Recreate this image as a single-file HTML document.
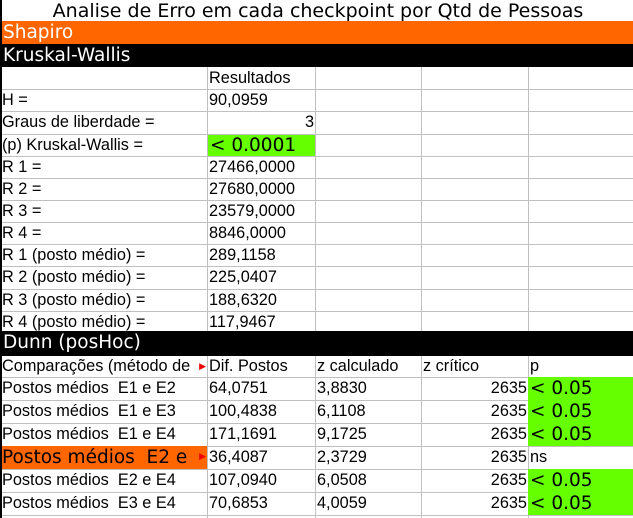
<!DOCTYPE html>
<html><head><meta charset="utf-8"><style>
*{margin:0;padding:0;box-sizing:border-box}
body{width:633px;height:518px;overflow:hidden;background:#fff;position:relative;font-family:"Liberation Sans",sans-serif;font-size:16.3px;color:#000}
.c{position:absolute;height:22px;line-height:22px;white-space:nowrap;overflow:hidden;padding-left:2px}
.b .c{height:23px;line-height:23px}
.h{position:absolute;left:0;width:633px;border-top:1px solid #c0c0c0}
.v{position:absolute;border-left:1px solid #c0c0c0}
.dj{font-family:"DejaVu Sans",sans-serif;font-size:18.5px}
.r{text-align:right;padding-right:1px}
.g{background:#66ff00}
.band{position:absolute;left:0;width:633px;height:23px;line-height:23px;padding-left:3px;font-family:"DejaVu Sans",sans-serif;font-size:18.5px}
.ar{position:absolute;right:1px;top:0;color:#e00;font-size:9px}
</style></head><body>
<div style="position:absolute;left:0;top:0;width:636px;height:22px;line-height:22px;text-align:center;font-family:'DejaVu Sans',sans-serif;font-size:19px">Analise de Erro em cada checkpoint por Qtd de Pessoas</div>
<div class="band" style="top:21px;background:#ff6600;color:#fff">Shapiro</div>
<div class="band" style="top:44px;background:#000;color:#fff">Kruskal-Wallis</div>

<div class="v" style="left:207px;top:67px;height:265px"></div>
<div class="v" style="left:315px;top:67px;height:265px"></div>
<div class="v" style="left:421px;top:67px;height:265px"></div>
<div class="v" style="left:528px;top:67px;height:265px"></div>
<div class="v" style="left:207px;top:356px;height:162px"></div>
<div class="v" style="left:315px;top:356px;height:162px"></div>
<div class="v" style="left:421px;top:356px;height:162px"></div>
<div class="v" style="left:528px;top:356px;height:162px"></div>

<div class="h" style="top:89px"></div><div class="h" style="top:111px"></div><div class="h" style="top:134px"></div>
<div class="h" style="top:156px"></div><div class="h" style="top:178px"></div><div class="h" style="top:200px"></div>
<div class="h" style="top:222px"></div><div class="h" style="top:244px"></div><div class="h" style="top:266px"></div>
<div class="h" style="top:289px"></div><div class="h" style="top:311px"></div>
<div class="h" style="top:377px"></div><div class="h" style="top:400px"></div><div class="h" style="top:423px"></div>
<div class="h" style="top:446px"></div><div class="h" style="top:469px"></div><div class="h" style="top:492px"></div><div class="h" style="top:515px"></div>

<div class="c" style="left:207px;top:67px;width:108px">Resultados</div>
<div class="c" style="left:0;top:89px;width:207px">H =</div><div class="c" style="left:207px;top:89px;width:108px">90,0959</div>
<div class="c" style="left:0;top:111px;width:207px">Graus de liberdade =</div><div class="c r" style="left:207px;top:111px;width:108px">3</div>
<div class="c" style="left:0;top:134px;width:207px">(p) Kruskal-Wallis =</div><div class="c g dj" style="left:208px;top:135px;width:107px;height:21px;line-height:21px">&lt; 0.0001</div>
<div class="c" style="left:0;top:156px;width:207px">R 1 =</div><div class="c" style="left:207px;top:156px;width:108px">27466,0000</div>
<div class="c" style="left:0;top:178px;width:207px">R 2 =</div><div class="c" style="left:207px;top:178px;width:108px">27680,0000</div>
<div class="c" style="left:0;top:200px;width:207px">R 3 =</div><div class="c" style="left:207px;top:200px;width:108px">23579,0000</div>
<div class="c" style="left:0;top:222px;width:207px">R 4 =</div><div class="c" style="left:207px;top:222px;width:108px">8846,0000</div>
<div class="c" style="left:0;top:244px;width:207px">R 1 (posto médio) =</div><div class="c" style="left:207px;top:244px;width:108px">289,1158</div>
<div class="c" style="left:0;top:266px;width:207px">R 2 (posto médio) =</div><div class="c" style="left:207px;top:266px;width:108px">225,0407</div>
<div class="c" style="left:0;top:289px;width:207px">R 3 (posto médio) =</div><div class="c" style="left:207px;top:289px;width:108px">188,6320</div>
<div class="c" style="left:0;top:311px;width:207px">R 4 (posto médio) =</div><div class="c" style="left:207px;top:311px;width:108px">117,9467</div>

<div class="band" style="top:331px;height:25px;line-height:24px;background:#000;color:#fff">Dunn (posHoc)</div>

<div class="b">
<div class="c" style="left:0;top:355px;width:207px">Comparações (método de<span class="ar">▶</span></div>
<div class="c" style="left:207px;top:355px;width:108px">Dif. Postos</div>
<div class="c" style="left:315px;top:355px;width:106px">z calculado</div>
<div class="c" style="left:421px;top:355px;width:107px">z crítico</div>
<div class="c" style="left:528px;top:355px;width:105px">p</div>

<div class="c" style="left:0;top:377px;width:207px">Postos médios&nbsp; E1 e E2</div><div class="c" style="left:207px;top:377px;width:108px">64,0751</div><div class="c" style="left:315px;top:377px;width:106px">3,8830</div><div class="c r" style="left:421px;top:377px;width:107px">2635</div><div class="c g dj" style="left:528px;top:377px;width:105px">&lt; 0.05</div>
<div class="c" style="left:0;top:400px;width:207px">Postos médios&nbsp; E1 e E3</div><div class="c" style="left:207px;top:400px;width:108px">100,4838</div><div class="c" style="left:315px;top:400px;width:106px">6,1108</div><div class="c r" style="left:421px;top:400px;width:107px">2635</div><div class="c g dj" style="left:528px;top:400px;width:105px">&lt; 0.05</div>
<div class="c" style="left:0;top:423px;width:207px">Postos médios&nbsp; E1 e E4</div><div class="c" style="left:207px;top:423px;width:108px">171,1691</div><div class="c" style="left:315px;top:423px;width:106px">9,1725</div><div class="c r" style="left:421px;top:423px;width:107px">2635</div><div class="c g dj" style="left:528px;top:423px;width:105px">&lt; 0.05</div>
<div class="c dj" style="left:0;top:446px;width:207px;background:#ff6600"><span style="display:inline-block;width:192px;overflow:hidden;vertical-align:top">Postos médios&nbsp; E2 e E3</span><span class="ar">▶</span></div><div class="c" style="left:207px;top:446px;width:108px">36,4087</div><div class="c" style="left:315px;top:446px;width:106px">2,3729</div><div class="c r" style="left:421px;top:446px;width:107px">2635</div><div class="c" style="left:528px;top:446px;width:105px">ns</div>
<div class="c" style="left:0;top:469px;width:207px">Postos médios&nbsp; E2 e E4</div><div class="c" style="left:207px;top:469px;width:108px">107,0940</div><div class="c" style="left:315px;top:469px;width:106px">6,0508</div><div class="c r" style="left:421px;top:469px;width:107px">2635</div><div class="c g dj" style="left:528px;top:469px;width:105px">&lt; 0.05</div>
<div class="c" style="left:0;top:492px;width:207px">Postos médios&nbsp; E3 e E4</div><div class="c" style="left:207px;top:492px;width:108px">70,6853</div><div class="c" style="left:315px;top:492px;width:106px">4,0059</div><div class="c r" style="left:421px;top:492px;width:107px">2635</div><div class="c g dj" style="left:528px;top:492px;width:105px">&lt; 0.05</div>
</div>

<div style="position:absolute;left:0;top:0;width:2px;height:518px;background:#000"></div>
</body></html>
